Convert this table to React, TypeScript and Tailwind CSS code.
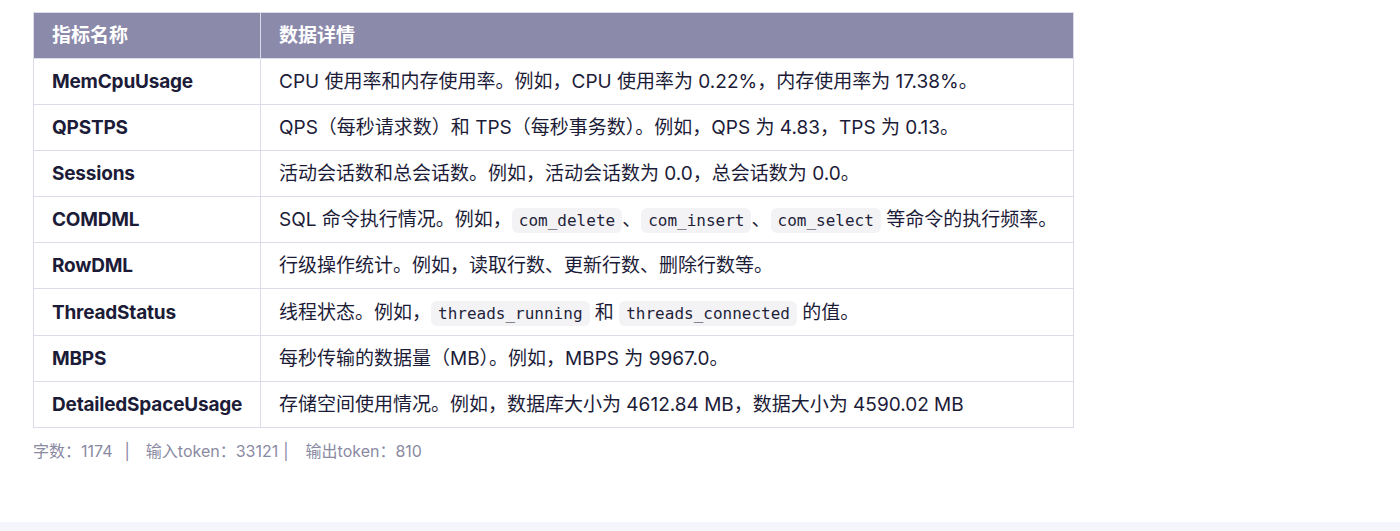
const rows: { name: string; detail: React.ReactNode; tall?: boolean }[] = [
  {
    name: "MemCpuUsage",
    detail: "CPU 使用率和内存使用率。例如，CPU 使用率为 0.22%，内存使用率为 17.38%。",
  },
  {
    name: "QPSTPS",
    detail: "QPS（每秒请求数）和 TPS（每秒事务数）。例如，QPS 为 4.83，TPS 为 0.13。",
  },
  {
    name: "Sessions",
    detail: "活动会话数和总会话数。例如，活动会话数为 0.0，总会话数为 0.0。",
  },
  {
    name: "COMDML",
    detail: (
      <>
        SQL 命令执行情况。例如，<Code>com_delete</Code>、<Code>com_insert</Code>、<Code>com_select</Code>{" "}
        等命令的执行频率。
      </>
    ),
  },
  {
    name: "RowDML",
    detail: "行级操作统计。例如，读取行数、更新行数、删除行数等。",
  },
  {
    name: "ThreadStatus",
    tall: true,
    detail: (
      <>
        线程状态。例如，<Code>threads_running</Code> 和 <Code>threads_connected</Code> 的值。
      </>
    ),
  },
  {
    name: "MBPS",
    detail: "每秒传输的数据量（MB）。例如，MBPS 为 9967.0。",
  },
  {
    name: "DetailedSpaceUsage",
    detail: "存储空间使用情况。例如，数据库大小为 4612.84 MB，数据大小为 4590.02 MB",
  },
];

function Code({ children }: { children: React.ReactNode }) {
  return (
    <code className="rounded-md bg-[#f3f3f6] px-[7px] py-[3px] font-['DejaVu_Sans_Mono',monospace] text-[16px] text-[#1f1f3a]">
      {children}
    </code>
  );
}

export default function App() {
  return (
    <div className="flex h-[531px] w-[1400px] flex-col bg-white font-['Inter','Noto_Sans_CJK_SC',sans-serif] text-[#1c1c38]">
      <div className="flex-1 px-[33px] pt-[12px]">
        <table className="w-[1041px] table-fixed border-collapse text-[19px]">
          <colgroup>
            <col className="w-[227px]" />
            <col />
          </colgroup>
          <thead>
            <tr className="h-[46px] bg-[#8b8aab] text-left text-white">
              <th className="border border-[#dcdce8] px-[18px] pt-[2px] font-bold">指标名称</th>
              <th className="border border-[#dcdce8] px-[18px] pt-[2px] font-bold">数据详情</th>
            </tr>
          </thead>
          <tbody>
            {rows.map((r) => (
              <tr key={r.name} className={r.tall ? "h-[47px]" : "h-[46px]"}>
                <td className="border border-[#dcdce8] px-[18px] pt-[2px] font-bold tracking-[-0.2px]">{r.name}</td>
                <td className="border border-[#dcdce8] px-[18px] pt-[2px] whitespace-nowrap">{r.detail}</td>
              </tr>
            ))}
          </tbody>
        </table>
        <div className="mt-[11px] flex items-center text-[16px] text-[#8a8aa2]">
          <span>字数：1174</span>
          <span className="ml-[12px] mr-[16px]">|</span>
          <span>输入token：33121</span>
          <span className="ml-[5px] mr-[17px]">|</span>
          <span>输出token：810</span>
        </div>
      </div>
      <div className="h-[9px] bg-[#f5f5fc]" />
    </div>
  );
}
